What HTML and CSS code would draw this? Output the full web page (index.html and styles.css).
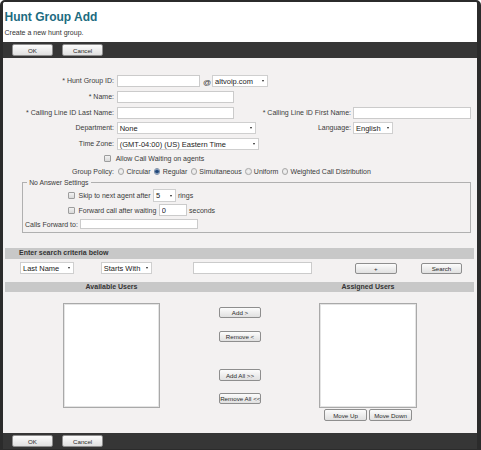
FILE: index.html
```html
<!DOCTYPE html>
<html>
<head>
<meta charset="utf-8">
<title>Hunt Group Add</title>
<link rel="stylesheet" href="styles.css">
</head>
<body>
<div class="page">
  <header class="head">
    <h1 class="title">Hunt Group Add</h1>
    <p class="subtitle">Create a new hunt group.</p>
  </header>

  <div class="toolbar">
    <button class="btn tb-btn">OK</button>
    <button class="btn tb-btn">Cancel</button>
  </div>

  <main class="main">
    <div class="form-grid">
      <label class="lbl">* Hunt Group ID:</label>
      <div class="span-rest">
        <input class="txt w-id" type="text">
        <span class="at">@</span>
        <div class="sel w-domain"><span>altvoip.com</span><i class="arr"></i></div>
      </div>

      <label class="lbl">* Name:</label>
      <div class="span-rest"><input class="txt w-name" type="text"></div>

      <label class="lbl">* Calling Line ID Last Name:</label>
      <div class="cell"><input class="txt w-name" type="text"></div>
      <label class="lbl">* Calling Line ID First Name:</label>
      <div class="cell"><input class="txt w-first" type="text"></div>

      <label class="lbl">Department:</label>
      <div class="cell"><div class="sel w-dept"><span>None</span><i class="arr"></i></div></div>
      <label class="lbl">Language:</label>
      <div class="cell"><div class="sel w-lang"><span>English</span><i class="arr"></i></div></div>

      <label class="lbl">Time Zone:</label>
      <div class="span-rest"><div class="sel w-tz"><span>(GMT-04:00) (US) Eastern Time</span><i class="arr"></i></div></div>

      <div class="allow-row">
        <input class="chk" type="checkbox">
        <span class="allow-text">Allow Call Waiting on agents</span>
      </div>

      <label class="lbl lbl-policy">Group Policy:</label>
      <div class="span-rest radios">
        <span class="opt"><input class="rad" type="radio" name="gp"><span>Circular</span></span>
        <span class="opt"><input class="rad" type="radio" name="gp" checked><span>Regular</span></span>
        <span class="opt"><input class="rad" type="radio" name="gp"><span>Simultaneous</span></span>
        <span class="opt"><input class="rad" type="radio" name="gp"><span>Uniform</span></span>
        <span class="opt"><input class="rad" type="radio" name="gp"><span>Weighted Call Distribution</span></span>
      </div>
    </div>

    <fieldset class="noanswer">
      <legend class="legend">No Answer Settings</legend>
      <div class="fs-row fs-skip">
        <input class="chk fs-chk" type="checkbox">
        <span class="fs-text">Skip to next agent after</span>
        <div class="sel w-rings"><span>5</span><i class="arr"></i></div>
        <span class="fs-after">rings</span>
      </div>
      <div class="fs-row fs-forward">
        <input class="chk fs-chk" type="checkbox">
        <span class="fs-text">Forward call after waiting</span>
        <input class="txt w-secs" type="text" value="0">
        <span class="fs-after2">seconds</span>
      </div>
      <div class="fs-row fs-calls">
        <span class="calls-lbl">Calls Forward to:</span>
        <input class="txt w-calls" type="text">
      </div>
    </fieldset>

    <div class="bar search-bar">Enter search criteria below</div>
    <div class="search-row">
      <div class="sel w-field"><span>Last Name</span><i class="arr"></i></div>
      <div class="sel w-mode"><span>Starts With</span><i class="arr"></i></div>
      <input class="txt w-query" type="text">
      <button class="btn s-plus">+</button>
      <button class="btn s-search">Search</button>
    </div>

    <div class="users">
      <div class="users-head">Available Users</div>
      <div class="users-head"></div>
      <div class="users-head">Assigned Users</div>

      <div class="col-avail">
        <div class="listbox"></div>
      </div>
      <div class="col-mid">
        <button class="btn mid-btn b-add">Add &gt;</button>
        <button class="btn mid-btn b-remove">Remove &lt;</button>
        <button class="btn mid-btn b-addall">Add All &gt;&gt;</button>
        <button class="btn mid-btn b-removeall">Remove All &lt;&lt;</button>
      </div>
      <div class="col-assigned">
        <div class="listbox listbox-r"></div>
        <div class="move-row">
          <button class="btn move-btn">Move Up</button>
          <button class="btn move-btn">Move Down</button>
        </div>
      </div>
    </div>
  </main>

  <div class="toolbar">
    <button class="btn tb-btn">OK</button>
    <button class="btn tb-btn">Cancel</button>
  </div>
</div>
</body>
</html>
```

FILE: styles.css
```css
* { box-sizing: border-box; }

html, body {
  margin: 0;
  padding: 0;
  background: #ffffff;
}

body {
  font-family: "Liberation Sans", Arial, sans-serif;
  font-size: 7px;
  color: #3a3a3a;
}

.page {
  width: 481px;
  height: 450px;
  border: solid #2b2b2b;
  border-width: 2px 4px 1px 3px;
  border-radius: 5px 5px 0 0;
  display: flex;
  flex-direction: column;
  overflow: hidden;
  background: #ffffff;
}

/* header */
.head {
  height: 40px;
  flex: none;
  padding: 7.5px 0 0 1.5px;
  background: #ffffff;
}

.title {
  margin: 0;
  font-size: 12px;
  line-height: 14px;
  font-weight: bold;
  color: #1c6b7f;
}

.subtitle {
  margin: 4px 0 0;
  font-size: 7px;
  line-height: 9px;
  color: #333333;
}

/* toolbars */
.toolbar {
  height: 16px;
  flex: none;
  background: #363636;
  display: flex;
  align-items: center;
  gap: 8.4px;
  padding-left: 8.7px;
}

.btn {
  font-family: "Liberation Sans", Arial, sans-serif;
  font-size: 6.2px;
  line-height: 9px;
  color: #2a2a2a;
  padding: 0;
  margin: 0;
  border: 1px solid #8e8e8e;
  border-radius: 2px;
  background: linear-gradient(#fcfcfc, #e0e0e0);
  white-space: nowrap;
  overflow: hidden;
}

.tb-btn {
  width: 41.7px;
  height: 11.5px;
}

/* main form */
.main {
  flex: 1;
  background: #f3f1f1;
  padding-top: 17px;
}

.form-grid {
  display: grid;
  grid-template-columns: 111px 140px 93px 1fr;
  column-gap: 2px;
  row-gap: 3.8px;
  align-items: center;
}

.lbl {
  text-align: right;
  white-space: nowrap;
  line-height: 12px;
  color: #3c3c3c;
}

.lbl-policy { line-height: 9.5px; }

.span-rest {
  grid-column: 2 / -1;
  display: flex;
  align-items: center;
}

.cell {
  display: flex;
  align-items: center;
}

.txt {
  height: 12px;
  margin: 0;
  padding: 0 2px;
  border: 1px solid #cbcbcb;
  background: #ffffff;
  font-family: "Liberation Sans", Arial, sans-serif;
  font-size: 7.5px;
  color: #222222;
  outline: none;
}

.w-id { width: 83.3px; margin-left: 0.7px; }
.w-name { width: 117.6px; margin-left: 0.7px; }
.w-first { width: 118.3px; }

.at {
  font-size: 8px;
  margin: 2px 1px 0 3px;
  color: #333333;
}

.sel {
  display: flex;
  align-items: center;
  justify-content: space-between;
  height: 12px;
  border: 1px solid #cfcfcf;
  background: #ffffff;
  padding: 0 3px 0 2px;
  font-size: 7.5px;
  color: #222222;
  white-space: nowrap;
}

.arr {
  display: block;
  width: 0;
  height: 0;
  border-left: 1.6px solid transparent;
  border-right: 1.6px solid transparent;
  border-top: 2.2px solid #222222;
  margin-left: 3px;
  flex: none;
}

.w-domain { width: 56px; }
.w-dept { width: 140px; margin-left: 0.7px; }
.w-lang { width: 40px; }
.w-tz { width: 142.3px; margin-left: 0.7px; }

.allow-row {
  grid-column: 1 / -1;
  display: flex;
  align-items: center;
  height: 9px;
  padding-left: 101.3px;
}

.allow-text { margin-left: 4.4px; }

.chk {
  appearance: none;
  -webkit-appearance: none;
  width: 7px;
  height: 7px;
  margin: 0;
  border: 1px solid #9d9d9d;
  border-radius: 1px;
  background: linear-gradient(#f2f2f2, #d9d9d9);
  flex: none;
}

.radios {
  height: 9.5px;
  padding-left: 1.7px;
}

.opt {
  display: flex;
  align-items: center;
  gap: 2.3px;
  margin-right: 3.3px;
  white-space: nowrap;
}

.rad {
  appearance: none;
  -webkit-appearance: none;
  width: 6.5px;
  height: 6.5px;
  margin: 0;
  border: 1px solid #a9a9a9;
  border-radius: 50%;
  background: radial-gradient(circle, #f4f4f4 0, #dedede 100%);
  flex: none;
}

.rad:checked {
  border-color: #7d8ea6;
  background: radial-gradient(circle, #1e3e6c 0, #2b5386 1.6px, #c8d5e6 2.4px);
}

/* fieldset */
.noanswer {
  margin: 1.9px 0 0 18.7px;
  width: 449px;
  min-inline-size: 0;
  border: 1px solid #b0b0b0;
  padding: 2px 2px 2.4px 2px;
}

.legend {
  margin-left: 2.5px;
  padding: 0 2px;
  line-height: 9px;
  font-size: 6.8px;
  color: #3a3a3a;
}

.fs-row {
  display: flex;
  align-items: center;
  white-space: nowrap;
}

.fs-skip { height: 12.7px; }
.fs-forward { height: 12px; margin-top: 2.3px; }
.fs-calls { height: 10px; margin-top: 3.3px; }

.fs-chk { margin-left: 43.6px; }
.fs-text { margin-left: 3.3px; }

.w-rings { width: 23.3px; height: 12.7px; margin-left: 2.4px; }
.fs-after { margin-left: 1.7px; }

.w-secs { width: 28.3px; margin-left: 2.3px; }
.fs-after2 { margin-left: 2px; }

.calls-lbl { margin-left: 0.3px; }
.w-calls { width: 118.3px; height: 10px; margin-left: 1.7px; }

/* search */
.bar {
  background: #c8c8c8;
  font-weight: bold;
  color: #333333;
}

.search-bar {
  margin: 15.6px 3px 0 2px;
  height: 10.7px;
  line-height: 10.7px;
  padding-left: 14px;
}

.search-row {
  display: flex;
  align-items: center;
  height: 12px;
  margin-top: 3.3px;
}

.w-field { width: 54px; margin-left: 17px; }
.w-mode { width: 51.6px; margin-left: 26.7px; }
.w-query { width: 118.4px; margin-left: 41px; }

.s-plus { width: 41.7px; height: 11.7px; margin-left: 43.3px; }
.s-search { width: 41.6px; height: 11.7px; margin-left: 24px; }

/* users */
.users {
  display: grid;
  grid-template-columns: 213px 44px 212px;
  margin: 8px 0 0 2px;
}

.users-head {
  background: #c8c8c8;
  height: 10px;
  line-height: 10px;
  text-align: center;
  font-weight: bold;
  color: #333333;
}

.col-avail,
.col-assigned {
  display: flex;
  flex-direction: column;
  align-items: center;
  padding-top: 10.4px;
}

.listbox {
  width: 96.7px;
  height: 105px;
  background: #ffffff;
  border: 1px solid #a9a9a9;
  box-shadow: inset 0 0 0 1px #e4e4e4;
}

.listbox-r { width: 97.4px; }

.col-mid {
  display: flex;
  flex-direction: column;
  align-items: center;
  padding-top: 14.4px;
}

.mid-btn {
  width: 41.7px;
  height: 11.6px;
}

.b-remove { margin-top: 12.4px; }
.b-addall { margin-top: 27px; }
.b-removeall { margin-top: 11.7px; }

.move-row {
  display: flex;
  gap: 2.6px;
  margin-top: 1.6px;
}

.move-btn {
  width: 42.4px;
  height: 11.7px;
}
```
